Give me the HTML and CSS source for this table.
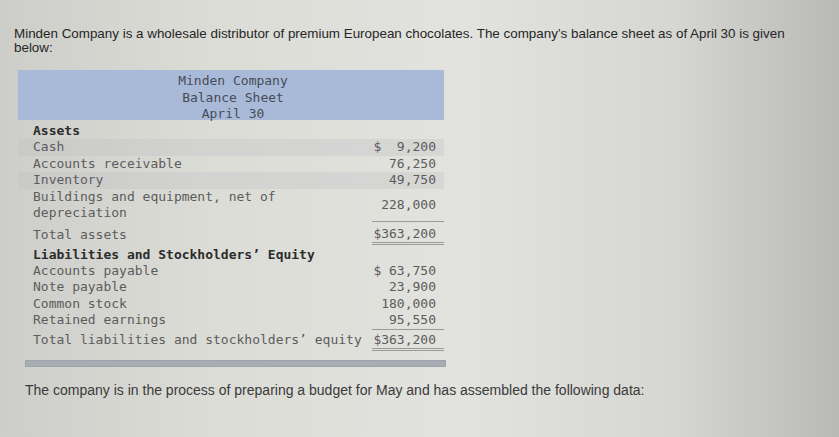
FILE: index.html
```html
<!DOCTYPE html>
<html>
<head>
<meta charset="utf-8">
<link rel="stylesheet" href="styles.css">
</head>
<body>
<div class="page">
  <p class="intro">Minden Company is a wholesale distributor of premium European chocolates. The company’s balance sheet as of April 30 is given below:</p>
  <div class="sheet">
    <div class="sheet-head">
      <div>Minden Company</div>
      <div>Balance Sheet</div>
      <div>April 30</div>
    </div>
    <table class="bs">
      <tr class="section first"><td class="lbl">Assets</td><td class="num"></td></tr>
      <tr class="shade"><td class="lbl">Cash</td><td class="num">$&nbsp;&nbsp;9,200</td></tr>
      <tr><td class="lbl">Accounts receivable</td><td class="num">76,250</td></tr>
      <tr class="shade"><td class="lbl">Inventory</td><td class="num">49,750</td></tr>
      <tr><td class="lbl">Buildings and equipment, net of<br>depreciation</td><td class="num under">228,000</td></tr>
      <tr class="total"><td class="lbl">Total assets</td><td class="num dbl">$363,200</td></tr>
      <tr class="section gap"><td class="lbl">Liabilities and Stockholders’ Equity</td><td class="num"></td></tr>
      <tr><td class="lbl">Accounts payable</td><td class="num">$&nbsp;63,750</td></tr>
      <tr><td class="lbl">Note payable</td><td class="num">23,900</td></tr>
      <tr><td class="lbl">Common stock</td><td class="num">180,000</td></tr>
      <tr><td class="lbl">Retained earnings</td><td class="num under">95,550</td></tr>
      <tr class="total last"><td class="lbl">Total liabilities and stockholders’ equity</td><td class="num dbl">$363,200</td></tr>
    </table>
  </div>
  <div class="bar"></div>
  <p class="outro">The company is in the process of preparing a budget for May and has assembled the following data:</p>
</div>
</body>
</html>
```

FILE: styles.css
```css
html, body {
  margin: 0;
  padding: 0;
  height: 100%;
}
body {
  background: linear-gradient(90deg, #cdcec9 0%, #dcdcd7 25%, #e2e2de 55%, #d6d6d2 80%, #b9bab7 100%);
  font-family: "Liberation Sans", Arial, sans-serif;
  color: #2b2b2b;
}
.page {
  padding: 27px 30px 0 14px;
}
.intro {
  margin: 0;
  font-size: 13.4px;
  line-height: 14px;
  color: #262626;
}
.sheet {
  margin: 15px 0 0 4px;
  width: 426px;
  font-family: "DejaVu Sans Mono", "Liberation Mono", monospace;
  font-size: 13px;
  color: #5c5c5c;
}
.sheet-head {
  background: #a9bad8;
  color: #474c57;
  text-align: center;
  height: 50px;
  box-sizing: border-box;
  padding-top: 3px;
  line-height: 16.5px;
  padding-left: 4px;
}
.bs {
  width: 100%;
  border-collapse: collapse;
}
.bs td {
  padding: 0;
  line-height: 16.5px;
  vertical-align: middle;
}
.bs .lbl {
  padding-left: 15px;
}
.bs .num {
  text-align: right;
  padding-right: 8px;
  width: 64px;
  white-space: nowrap;
}
.bs tr.shade td {
  background: rgba(190, 192, 195, 0.3);
}
.bs tr.section td {
  font-weight: bold;
  color: #2c2c2c;
  line-height: 17px;
}
.bs tr.section.first td {
  padding-top: 2px;
}
.bs tr.section.gap td {
  padding-top: 2px;
}
.bs td.under {
  border-bottom: 1px solid #9a9a9a;
}
.bs tr.total td {
  padding-top: 4px;
  line-height: 16px;
}
.bs tr.total.last td {
  padding-top: 2px;
}
.bs td.dbl {
  border-bottom: 3px double #9a9a9a;
}
.bar {
  margin: 9px 0 0 11px;
  width: 419px;
  height: 5px;
  background: #a8adb4;
  border: 1px solid #9ea3aa;
}
.outro {
  margin: 16px 0 0 11px;
  font-size: 14px;
  line-height: 15px;
  color: #3a3a3a;
}
```
